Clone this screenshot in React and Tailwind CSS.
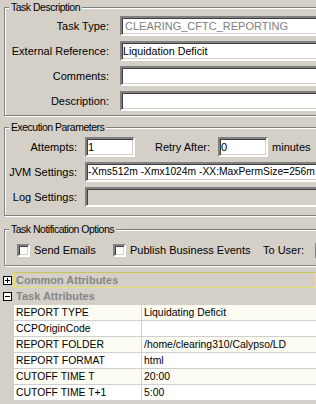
const sunken =
  "border-2 border-t-[#808080] border-l-[#808080] border-b-white border-r-white shadow-[inset_1px_1px_0_#404040,inset_-1px_-1px_0_#d4d0c8]";

function Group({ title, className, children }) {
  return (
    <fieldset
      className={`ml-[4px] w-[340px] min-w-0 border border-[#808080] shadow-[inset_1px_1px_0_#fff,1px_1px_0_#fff] ${className}`}
    >
      <legend className="ml-[4px] bg-[#d4d0c8] px-[2px] text-[10.5px] leading-[13px] tracking-[-0.5px]">
        {title}
      </legend>
      {children}
    </fieldset>
  );
}

function Field({ label, labelWidth, gap, value, muted, disabled, inputClass = "" }) {
  return (
    <div className="flex h-[20px] shrink-0 items-center">
      <span className="shrink-0 text-right" style={{ width: labelWidth }}>
        {label}
      </span>
      <div
        className={`flex h-[20px] shrink-0 items-center overflow-hidden whitespace-nowrap ${sunken} ${
          disabled ? "bg-[#d4d0c8]" : "bg-white"
        } ${muted ? "pl-[3px] text-[#808080]" : "pl-[1px] text-black"} ${inputClass}`}
        style={{ marginLeft: gap }}
      >
        {value}
      </div>
    </div>
  );
}

function Checkbox({ label, className = "" }) {
  return (
    <div className={`flex shrink-0 items-center ${className}`}>
      <span className={`h-[13px] w-[13px] shrink-0 bg-white ${sunken}`} />
      <span className="ml-[4px] whitespace-nowrap">{label}</span>
    </div>
  );
}

function Toggle({ open }) {
  return (
    <span className="relative flex h-[9px] w-[9px] items-center justify-center border border-black bg-white">
      <span className="absolute h-[1px] w-[5px] bg-black" />
      {!open && <span className="absolute h-[5px] w-[1px] bg-black" />}
    </span>
  );
}

const attributes = [
  ["REPORT TYPE", "Liquidating Deficit"],
  ["CCPOriginCode", ""],
  ["REPORT FOLDER", "/home/clearing310/Calypso/LD"],
  ["REPORT FORMAT", "html"],
  ["CUTOFF TIME T", "20:00"],
  ["CUTOFF TIME T+1", "5:00"],
];

export default function App() {
  return (
    <div
      className="h-[404px] w-[316px] overflow-hidden bg-[#d4d0c8] pt-[1px] text-[11px] text-black"
      style={{ fontFamily: '"Liberation Sans", Arial, sans-serif' }}
    >
      <Group title="Task Description" className="pb-[4px] pt-[2px]">
        <div className="flex flex-col gap-[5px]">
          <Field label="Task Type:" labelWidth={104} gap={11} value="CLEARING_CFTC_REPORTING" muted inputClass="w-[230px]" />
          <Field label="External Reference:" labelWidth={104} gap={11} value="Liquidation Deficit" inputClass="w-[230px] text-[10.7px]" />
          <Field label="Comments:" labelWidth={104} gap={11} value="" inputClass="w-[230px]" />
          <Field label="Description:" labelWidth={104} gap={11} value="" inputClass="w-[230px]" />
        </div>
      </Group>

      <Group title="Execution Parameters" className="mt-[5px] pb-[8px] pt-[3px]">
        <div className="flex flex-col gap-[5px]">
          <div className="flex items-center">
            <Field label="Attempts:" labelWidth={72} gap={8} value="1" inputClass="w-[50px]" />
            <span className="ml-[20px] shrink-0 whitespace-nowrap">Retry After:</span>
            <div className={`ml-[8px] flex h-[20px] w-[50px] shrink-0 items-center bg-white pl-[1px] ${sunken}`}>0</div>
            <span className="ml-[4px] shrink-0">minutes</span>
          </div>
          <Field
            label="JVM Settings:"
            labelWidth={72}
            gap={8}
            value="-Xms512m -Xmx1024m -XX:MaxPermSize=256m"
            inputClass="w-[250px] text-[10.3px]"
          />
          <Field label="Log Settings:" labelWidth={72} gap={8} value="" disabled inputClass="w-[250px]" />
        </div>
      </Group>

      <Group title="Task Notification Options" className="mt-[7px] pb-[8px] pt-[8px]">
        <div className="flex h-[13px] items-center pl-[12px]">
          <Checkbox label="Send Emails" className="w-[96px]" />
          <Checkbox label="Publish Business Events" className="w-[150px]" />
          <span className="shrink-0 whitespace-nowrap">To User:</span>
          <span className={`ml-[11px] h-[16px] w-[40px] shrink-0 bg-white ${sunken}`} />
        </div>
      </Group>

      <div className="mt-[6px]">
        <div className="flex h-[16px] items-center">
          <div className="flex w-[14px] shrink-0 justify-center pl-[1px]">
            <Toggle open={false} />
          </div>
          <div className="flex h-[16px] flex-1 items-center border border-[#e4e26c] border-t-[#c9c456] pl-[1px] font-bold text-[#868686]">
            Common Attributes
          </div>
        </div>
        <div className="flex h-[17px] items-center">
          <div className="flex w-[14px] shrink-0 justify-center pl-[1px]">
            <Toggle open />
          </div>
          <div className="flex-1 pl-[2px] font-bold text-[#868686]">Task Attributes</div>
        </div>
        {attributes.map(([name, value], i) => (
          <div key={name} className="flex h-[16px] text-[10.4px]">
            <div className="w-[14px] shrink-0" />
            <div
              className={`flex flex-1 border-b border-[#cfcfcf] ${
                i % 2 === 0 ? "bg-[#fcfcf2]" : "bg-white"
              }`}
            >
              <div className="flex w-[128px] shrink-0 items-center border-r border-[#cfcfcf] pl-[2px]">
                {name}
              </div>
              <div className="flex flex-1 items-center whitespace-nowrap pl-[2px]">{value}</div>
            </div>
          </div>
        ))}
      </div>
    </div>
  );
}
